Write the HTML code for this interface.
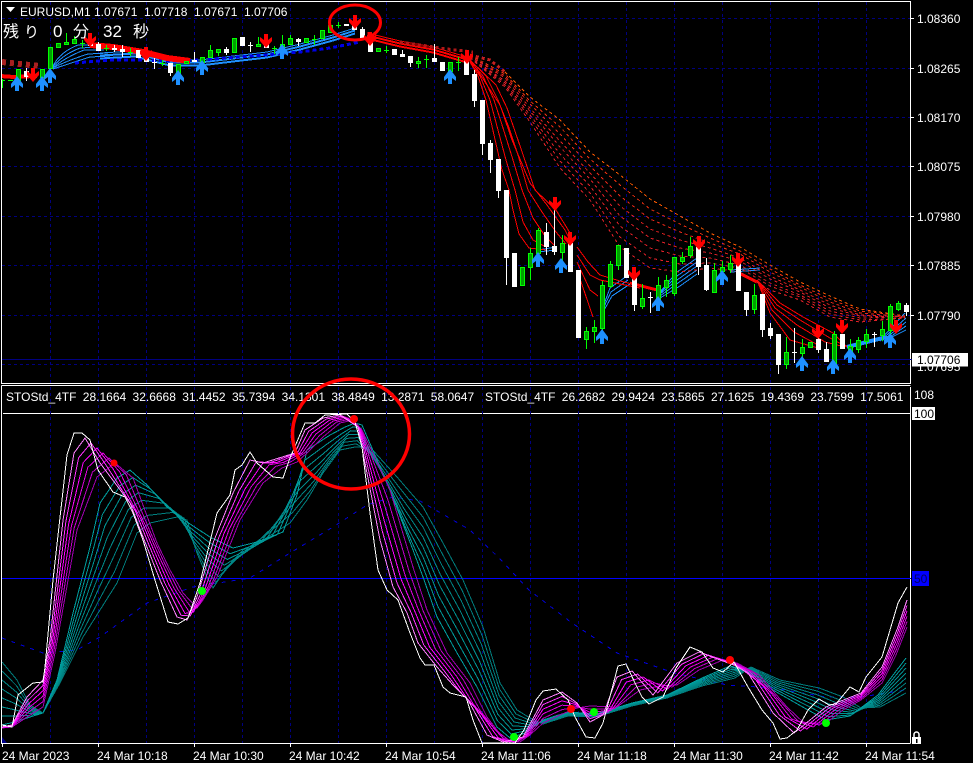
<!DOCTYPE html>
<html><head><meta charset="utf-8"><title>EURUSD,M1</title>
<style>
html,body{margin:0;padding:0;background:#000;width:973px;height:763px;overflow:hidden}
svg{display:block}
text{font-family:"Liberation Sans","Noto Sans CJK JP",sans-serif;font-size:12px;fill:#fff}
.c{shape-rendering:crispEdges;fill:none}
.mg{animation:mg .001s linear both}
.tl{animation:tl .001s linear both}
@keyframes mg{
from{d:path("M2 727L12 725L27 697L43 680L50 640L63 520L74 453L85 438L100 463L130 503L143 537L160 580L177 617L187 620L197 597L213 543L233 493L250 460L263 463L295 453L305 430L323 418L340 415L358 427L380 540L393 587L407 613L418 643L437 667L453 685L468 700L487 735L503 742L523 737L543 700L562 692L577 703L590 722L603 715L617 677L632 671L653 695L677 663L699 652L720 660L734 665L748 673L773 713L794 733L826 707L861 693L882 667L898 627L907 600")}
to{d:path("M2 728L12 727L30 715L43 707L55 653L77 530L97 477L115 463L133 478L157 543L170 570L183 593L197 608L203 600L217 577L240 520L263 483L282 468L297 462L307 453L323 437L340 423L353 420L362 430L390 490L413 567L427 610L447 653L470 683L487 717L503 738L515 742L520 742L530 735L543 723L562 714L577 708L590 706L617 707L640 690L660 686L677 685L699 670L723 660L737 663L759 675L787 707L804 723L826 723L843 710L861 700L882 683L896 655L907 627")}
}
@keyframes tl{
from{d:path("M2 725L15 722L30 717L43 713L57 680L73 613L90 547L100 503L117 478L130 470L147 485L167 507L187 522L210 537L233 548L257 542L283 532L297 495L307 450L330 435L345 427L355 423L362 425L390 490L413 550L423 577L437 617L457 653L477 687L497 727L510 738L525 733L543 720L568 712L596 714L632 703L667 695L702 678L730 666L745 670L773 690L808 710L826 720L850 716L878 695L906 658")}
to{d:path("M2 662L17 680L30 705L43 713L60 683L83 637L100 610L117 583L137 533L150 523L177 517L187 520L197 553L207 577L213 588L227 567L243 550L263 540L290 523L307 500L323 473L340 450L355 447L370 447L397 477L423 507L443 543L463 580L483 627L500 683L517 710L530 718L543 724L568 716L596 717L632 706L667 698L702 686L735 678L751 667L780 680L819 688L843 697L861 708L880 707L906 693")}
}
</style></head><body>
<svg width="973" height="763" viewBox="0 0 973 763" xmlns="http://www.w3.org/2000/svg">
<defs>
<clipPath id="top"><rect x="2" y="2" width="908" height="380"/></clipPath>
<clipPath id="bot"><rect x="2" y="414" width="906" height="329"/></clipPath>
<path id="da" d="M-2 0h4v6l4-3v4L0 14-6 7V3l4 3z" fill="#f00"/>
<path id="ua" d="M0 0L6 8V12L2 9V15H-2V9L-6 12V8Z" fill="#1e90ff"/>
<path id="bb" fill="none" d="M100 56L135 54 170 63 200 63 233 59 267 55 300 47 333 38 355 31"/>
<path id="rb" fill="none" d="M367 36L400 44 433 50 467 60"/>
</defs>

<!-- frames -->
<path class="c" stroke="#fff" d="M1.5 1.5H910.5V383.5H1.5ZM1.5 385.5H910.5M910.5 387V743.5M1.5 385.5V743.5H910.5M3 413.5H911"/>

<!-- grid -->
<path class="c" stroke="#000080" stroke-dasharray="3 3" d="M50.5 2V383M98.5 2V383M146.5 2V383M194.5 2V383M242.5 2V383M290.5 2V383M338.5 2V383M386.5 2V383M434.5 2V383M482.5 2V383M530.5 2V383M578.5 2V383M626.5 2V383M674.5 2V383M722.5 2V383M770.5 2V383M818.5 2V383M866.5 2V383M2 18.5H910M2 68.5H910M2 117.5H910M2 166.5H910M2 216.5H910M2 265.5H910M2 315.5H910M2 364.5H910M50.5 387V743M98.5 387V743M146.5 387V743M194.5 387V743M242.5 387V743M290.5 387V743M338.5 387V743M386.5 387V743M434.5 387V743M482.5 387V743M530.5 387V743M578.5 387V743M626.5 387V743M674.5 387V743M722.5 387V743M770.5 387V743M818.5 387V743M866.5 387V743"/>
<path class="c" stroke="#000080" d="M2 359.5H912"/>
<path class="c" stroke="#fff" d="M911 18.5h3M911 68.5h3M911 117.5h3M911 166.5h3M911 216.5h3M911 265.5h3M911 315.5h3M2.5 744v3M98.5 744v3M194.5 744v3M290.5 744v3M386.5 744v3M482.5 744v3M578.5 744v3M674.5 744v3M770.5 744v3M866.5 744v3"/>

<g clip-path="url(#top)">
<!-- dark red stubs left -->
<path class="c" stroke="#a82020" stroke-width="6" stroke-dasharray="4 4" d="M2 62L20 64 40 66"/>
<path class="c" stroke="#f00" stroke-width="4" d="M0 76L14 77 34 76"/>
<!-- blue MAs -->
<g class="c" stroke="#1e90ff">
<path d="M53 66Q60 52 78 45L96 45M53 67Q62 55 80 48L100 47M53 68Q64 58 84 50L104 50M53 68Q66 61 88 54L108 53M53 69Q68 64 90 57L110 56"/>
<use href="#bb" y="-3"/><use href="#bb" y="-1"/><use href="#bb" y="0"/><use href="#bb" y="2"/><use href="#bb" y="3"/>
<path d="M603 307L610 288 627 276M603 309L611 292 628 280M603 312L612 296 630 284M660 292L677 272 697 258M660 293L677 276 697 262M660 294L677 280 697 266M660 296L678 283 697 270M660 298L680 286 697 274M731 270L760 268M731 272L760 270"/>
<path stroke-width="4" d="M847 347L887 337"/>
<path d="M880 340L905 313M880 341L906 318M882 341L906 322M884 341L906 326M886 340L906 330"/>
<path d="M538 250L556 247M538 252L556 250"/>
</g>
<path class="c" stroke="#0000e6" stroke-width="3" stroke-dasharray="4 3" d="M75 63L110 60 133 60 170 61 200 60 240 57 300 52 330 48 360 42"/>
<!-- red MAs -->
<g class="c" stroke="#f00">
<path stroke-width="6" d="M90 45L113 47 143 52 167 58 190 61"/>
<use href="#rb" y="-3"/><use href="#rb" y="-1"/><use href="#rb" y="0"/><use href="#rb" y="2"/><use href="#rb" y="3"/>
<path stroke-width="3" d="M630 283L657 290M737 272L757 282"/>
<path d="M470 62L478 76 486 100 494 135 502 170 509 190 513 210 519 234 529 248 546 250"/>
<path d="M470 62L480 76 490 100 498 130 506 160 515 190 523 222 533 240 546 247"/>
<path d="M470 61L483 76 494 100 503 128 513 160 522 190 533 218 545 236 555 246"/>
<path d="M470 60L486 76 498 100 508 125 518 155 528 190 542 212 556 232 566 244"/>
<path d="M470 60L496 85 507 108 518 140 535 190 556 210 570 233"/>
<path d="M470 59L500 105 512 140 530 183 547 205 565 230 570 240"/>
<path d="M577 247L588 262 600 275 620 281 640 286 656 289M577 255L590 275 600 280 640 288M577 262L590 290 598 296M577 270L593 317"/>
<path d="M757 280L770 313 790 340 818 348M757 280L772 310 794 332 820 346M757 280L775 308 797 325 825 342 845 347M757 280L777 305 800 320 830 338 847 347M757 280L780 303 803 317 833 333 847 347"/>
</g>
<g class="c" stroke-dasharray="3 3">
<path stroke="#b01818" stroke-width="3" d="M400 42L447 49 473 52"/>
<path stroke="#c82020" stroke-width="3" d="M470 55L490 60 505 72"/>
<path stroke="#ff5a00" d="M505 72L530 97 560 120 590 152 620 175 650 199 680 216 710 233 740 247 770 265 800 282 830 296 860 309 905 316"/>
<path stroke="#f03010" d="M470 55L505 74 530 101 560 127 590 159 620 185 650 209 680 224 710 238 740 251 770 269 800 285 830 299 860 311 905 316"/>
<path stroke="#e82818" d="M470 56L505 76 530 104 560 134 590 166 620 196 650 219 680 232 710 243 740 254 770 272 800 287 830 302 860 313 905 317"/>
<path stroke="#e02020" d="M470 56L505 78 530 108 560 141 590 173 620 206 650 229 680 240 710 248 740 258 770 276 800 290 830 305 860 315 905 317"/>
<path stroke="#e02028" d="M470 57L505 81 530 111 560 147 590 179 620 216 650 238 680 248 710 253 740 261 770 279 800 292 830 308 860 316 905 317"/>
<path stroke="#e02028" d="M470 57L505 83 530 115 560 154 590 186 620 226 650 248 680 256 710 258 740 265 770 283 800 295 830 311 860 318 905 317"/>
<path stroke="#e02028" d="M470 58L505 85 530 118 560 161 590 193 620 237 650 258 680 264 710 263 740 268 770 286 800 297 830 314 860 320 905 318"/>
<path stroke="#e02028" d="M470 58L505 87 530 122 560 168 590 200 620 247 650 268 680 272 710 268 740 272 770 290 800 300 830 317 860 322 905 318"/>
</g>
<!-- wicks & crosses white -->
<path class="c" stroke="#fff" d="M26.5 68V81M98.5 42V46M114.5 45V52M122.5 45V57M146.5 52V60M154.5 58V69M152 62.5h5M170.5 65V76M194.5 52V62M226.5 47V55M250.5 42V52M248 45.5h5M298.5 38V46M344 25.5h5M354.5 22V26M362.5 27V31M402.5 50V56M410.5 60V67M434.5 44V60M474.5 70V107M482.5 142V155M490.5 140V173M498.5 189V198M506.5 256V285M546.5 223V255M554.5 207V255M570.5 240V250M634.5 303V311M650.5 292V313M648 297.5h5M698.5 265V275M706.5 258V291M746.5 308V316M762.5 328V337M770.5 323V339M778.5 363V374M794.5 328V363M792 352.5h5M818.5 337V353M826.5 342V351M874.5 332V347M872 334.5h5M906.5 303V316"/>
<!-- wicks & crosses green -->
<path class="c" stroke="#0f0" d="M2.5 79V88M0 80.5h5M8 80.5h5M18.5 78V85M32 77.5h5M34.5 75V80M66.5 33V42M74.5 36V40M82.5 40V48M80 43.5h5M104 48.5h5M106.5 45V51M128 52.5h5M130.5 48V56M160 63.5h5M162.5 60V66M178.5 72V76M210.5 45V52M218.5 50V56M258.5 37V45M272 48.5h5M274.5 46V54M282.5 35V45M290.5 35V40M312 39.5h5M314.5 35V45M336 25.5h5M338.5 22V28M384 50.5h5M386.5 46V53M418.5 57V68M424 59.5h5M426.5 55V68M450.5 70V74M456 62.5h5M458.5 57V71M530.5 248V280M538.5 228V232M562.5 235V261M586.5 327V349M594.5 320V343M602.5 281V335M610.5 261V288M618.5 245V270M642.5 284V309M658.5 277V308M666.5 275V297M674.5 292V296M682.5 252V264M690.5 237V258M714.5 263V272M722.5 261V275M730.5 255V273M754.5 284V314M786.5 337V369M802.5 339V362M834.5 331V367M850.5 339V355M858.5 337V353M866.5 329V348M882.5 321V341M890.5 304V345M898.5 301V311"/>
<!-- white bodies -->
<path class="c" stroke="#fff" stroke-width="5" d="M26.5 71V77M90.5 42V46M98.5 44V51M114.5 48V50M122.5 49V52M138.5 50V58M146.5 58V62M170.5 63V73M194.5 60V62M226.5 49V53M242.5 37V46M266.5 43V48M298.5 39V42M346.5 24V26M354.5 24V30M362.5 29V38M370.5 41V52M394.5 49V55M402.5 54V57M410.5 56V63M434.5 58V62M442.5 62V71M466.5 60V75M474.5 74V101M482.5 100V144M490.5 143V160M498.5 159V191M506.5 190V258M514.5 253V287M546.5 232V247M554.5 246V252M570.5 243V272M578.5 270V338M626.5 248V278M634.5 277V305M698.5 247V267M706.5 265V290M738.5 263V291M746.5 292V310M762.5 294V330M770.5 328V336M778.5 334V365M818.5 339V350M826.5 349V362M842.5 334V349M906.5 305V312"/>
<!-- green bodies -->
<path class="c" stroke="#0f0" style="fill:#00a000" d="M16.5 69.5h4v11h-4zM40.5 69.5h4v8h-4zM48.5 47.5h4v21h-4zM56.5 43.5h4v4h-4zM64.5 42.5h4v2h-4zM72.5 39.5h4v4h-4zM176.5 64.5h4v9h-4zM184.5 61.5h4v2h-4zM200.5 57.5h4v5h-4zM208.5 50.5h4v7h-4zM216.5 49.5h4v3h-4zM232.5 38.5h4v14h-4zM256.5 44.5h4v2h-4zM280.5 44.5h4v4h-4zM288.5 38.5h4v6h-4zM304.5 38.5h4v4h-4zM320.5 30.5h4v8h-4zM328.5 25.5h4v7h-4zM376.5 48.5h4v3h-4zM416.5 61.5h4v2h-4zM448.5 62.5h4v9h-4zM520.5 267.5h4v18h-4zM528.5 253.5h4v14h-4zM536.5 230.5h4v23h-4zM560.5 243.5h4v9h-4zM584.5 331.5h4v8h-4zM592.5 327.5h4v4h-4zM600.5 285.5h4v43h-4zM608.5 264.5h4v22h-4zM616.5 245.5h4v20h-4zM640.5 298.5h4v8h-4zM656.5 285.5h4v14h-4zM664.5 280.5h4v7h-4zM672.5 257.5h4v36h-4zM680.5 257.5h4v4h-4zM688.5 246.5h4v9h-4zM712.5 270.5h4v22h-4zM720.5 267.5h4v4h-4zM728.5 263.5h4v6h-4zM752.5 295.5h4v14h-4zM784.5 352.5h4v12h-4zM800.5 347.5h4v6h-4zM808.5 342.5h4v5h-4zM832.5 334.5h4v29h-4zM848.5 346.5h4v5h-4zM856.5 340.5h4v9h-4zM864.5 334.5h4v7h-4zM880.5 329.5h4v6h-4zM888.5 306.5h4v24h-4zM896.5 303.5h4v6h-4z"/>
<!-- arrows -->
<use href="#da" x="90" y="33"/><use href="#da" x="266" y="34"/><use href="#da" x="146" y="47"/><use href="#da" x="355" y="15"/><use href="#da" x="370" y="32"/><use href="#da" x="467" y="50"/><use href="#da" x="33" y="68"/>
<use href="#da" x="555" y="197"/><use href="#da" x="570" y="232"/><use href="#da" x="634" y="267"/><use href="#da" x="699" y="236"/><use href="#da" x="738" y="253"/><use href="#da" x="818" y="325"/><use href="#da" x="842" y="320"/><use href="#da" x="896" y="320"/>
<use href="#ua" x="17" y="76"/><use href="#ua" x="42" y="76"/><use href="#ua" x="50" y="68"/><use href="#ua" x="178" y="70"/><use href="#ua" x="202" y="60"/><use href="#ua" x="282" y="44"/><use href="#ua" x="450" y="69"/>
<use href="#ua" x="538" y="252"/><use href="#ua" x="561" y="258"/><use href="#ua" x="602" y="329"/><use href="#ua" x="658" y="296"/><use href="#ua" x="722" y="270"/><use href="#ua" x="802" y="356"/><use href="#ua" x="833" y="359"/><use href="#ua" x="850" y="348"/><use href="#ua" x="890" y="333"/>
</g>

<!-- top labels -->
<path d="M6 7h9l-4.5 5z" fill="#fff"/>
<text x="20" y="16">EURUSD,M1</text>
<text x="94" y="16">1.07671</text><text x="144" y="16">1.07718</text><text x="194" y="16">1.07671</text><text x="244" y="16">1.07706</text>
<text x="3" y="37" style="font-size:16px">残</text><text x="24" y="37" style="font-size:15px">り</text>
<text x="53" y="37" style="font-size:17px">0</text><text x="73" y="37" style="font-size:16px">分</text>
<text x="103" y="37" style="font-size:17px">32</text><text x="133" y="37" style="font-size:16px">秒</text>

<text x="917" y="23">1.08360</text><text x="917" y="73">1.08265</text><text x="917" y="122">1.08170</text><text x="917" y="171">1.08075</text><text x="917" y="221">1.07980</text><text x="917" y="270">1.07885</text><text x="917" y="320">1.07790</text><text x="917" y="371">1.07695</text>
<rect x="912" y="353" width="56" height="13.5" fill="#fff"/>
<text x="917" y="364" style="fill:#000">1.07706</text>

<!-- lower pane -->
<path class="c" stroke="#0000d8" stroke-dasharray="4 6" d="M2 638L43 653 77 650 100 637 147 603 193 587 250 578 290 553 333 527 367 505 393 497 420 501 470 530 501 560 529 590 572 623 617 653 674 673 727 685 773 688 826 697 861 697 906 690"/>
<path class="c" stroke="#0000ff" d="M2 578.5H911"/>
<g clip-path="url(#bot)">
<g class="c">
<path class="tl" stroke="#007c7c" style="animation-iteration-count:1"/>
<path class="tl" stroke="#007f7f" style="animation-iteration-count:.857"/>
<path class="tl" stroke="#008484" style="animation-iteration-count:.714"/>
<path class="tl" stroke="#008989" style="animation-iteration-count:.571"/>
<path class="tl" stroke="#008e8e" style="animation-iteration-count:.429"/>
<path class="tl" stroke="#009393" style="animation-iteration-count:.286"/>
<path class="tl" stroke="#009898" style="animation-iteration-count:.143"/>
<path class="tl" stroke="#00a0a0" style="animation-iteration-count:.001"/>
<path class="mg" stroke="#a000b0" style="animation-iteration-count:1"/>
<path class="mg" stroke="#c000c8" style="animation-iteration-count:.8"/>
<path class="mg" stroke="#e000e0" style="animation-iteration-count:.6"/>
<path class="mg" stroke="#ff00ff" style="animation-iteration-count:.4"/>
<path class="mg" stroke="#ff30ff" style="animation-iteration-count:.2"/>
<path class="mg" stroke="#ff80ff" style="animation-iteration-count:.001"/>
</g>
<path class="c" stroke="#fff" d="M2 725L12 727 18 695 33 683 43 682 45 667 53 580 67 455 74 433 82 433 90 440 98 470 113 492 125 497 133 513 143 540 155 580 168 622 178 624 188 618 200 583 217 513 230 495 235 470 242 465 250 452 257 463 273 477 283 478 290 458 305 423 315 423 325 415 347 414 355 422 362 447 370 513 378 570 387 590 398 600 410 633 420 658 425 665 434 665 443 687 450 693 466 697 473 720 482 743 515 743 524 730 536 700 543 691 556 689 568 700 575 717 586 737 595 738 603 723 618 666 626 664 635 683 642 697 649 704 663 697 676 668 690 647 702 652 713 668 723 672 734 662 748 687 762 710 773 723 780 739 787 738 797 730 808 710 819 699 829 705 836 704 850 687 859 692 866 677 882 657 898 603 907 587"/>
</g>
<circle cx="114" cy="463" r="3.5" fill="#f00"/><circle cx="202" cy="591" r="4" fill="#0f0"/><circle cx="354" cy="419" r="4" fill="#f00"/><circle cx="514" cy="737" r="4" fill="#0f0"/><circle cx="571" cy="709" r="4" fill="#f00"/><circle cx="594" cy="712" r="4" fill="#0f0"/><circle cx="730" cy="660" r="4" fill="#f00"/><circle cx="826" cy="723" r="4" fill="#0f0"/>
<path d="M2 737L7 743H2Z" fill="#00008b"/>

<text x="6" y="401" style="word-spacing:3px">STOStd_4TF 28.1664 32.6668 31.4452 35.7394 34.1301 38.4849 13.2871 58.0647</text>
<text x="485" y="401" style="word-spacing:3px">STOStd_4TF 26.2682 29.9424 23.5865 27.1625 19.4369 23.7599 17.5061</text>

<text x="914" y="399">108</text>
<rect x="912" y="407" width="23" height="13" fill="#fff"/>
<text x="914" y="418" style="fill:#000">100</text>
<rect x="912" y="571" width="17" height="15" fill="#0000ff"/>
<text x="914" y="583" style="fill:#000060">50</text>
<!-- lock -->
<path d="M912 737h9v7h-9z" fill="#fff"/><path d="M914 737v-2.500a2.500 2.500 0 0 1 5 0V737" fill="none" stroke="#fff" stroke-width="1.500"/><path d="M916 739h1.500v4H916z" fill="#000"/>

<text x="2" y="760">24 Mar 2023</text><text x="97" y="760">24 Mar 10:18</text><text x="193" y="760">24 Mar 10:30</text><text x="289" y="760">24 Mar 10:42</text><text x="385" y="760">24 Mar 10:54</text><text x="481" y="760">24 Mar 11:06</text><text x="577" y="760">24 Mar 11:18</text><text x="673" y="760">24 Mar 11:30</text><text x="769" y="760">24 Mar 11:42</text><text x="865" y="760">24 Mar 11:54</text>

<!-- annotations -->
<ellipse cx="355" cy="22.500" rx="25.500" ry="17.500" fill="none" stroke="#f00" stroke-width="3"/>
<ellipse cx="351" cy="434" rx="58.500" ry="55" fill="none" stroke="#f00" stroke-width="3.500"/>
</svg>
</body></html>
